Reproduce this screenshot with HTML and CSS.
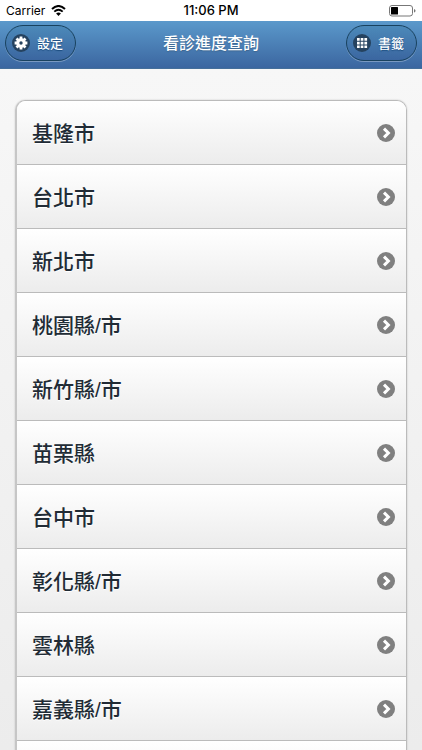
FILE: index.html
```
<!DOCTYPE html>
<html lang="zh-Hant">
<head>
    <meta charset="UTF-8">
    <meta name="viewport" content="width=device-width, initial-scale=1.0">
    <title>看診進度查詢</title>
    <link rel="stylesheet" href="styles.css">
</head>
<body>
    <!-- Shared arrow for the list rows -->
    <svg class="symbols" aria-hidden="true">
        <symbol id="arrow" viewBox="0 0 18 18">
            <circle cx="9" cy="9" r="9" fill="#808080"/>
            <path d="M7 4.6 L11.4 9 L7 13.4" fill="none" stroke="#fff" stroke-width="3"/>
        </symbol>
    </svg>

    <div class="status-bar">
        <div class="status-left">
            <span>Carrier</span>
            <svg width="15" height="11" viewBox="0 0 15 11">
                <path d="M1 4 Q7.5 -2 14 4" fill="none" stroke="#000" stroke-width="2"/>
                <path d="M3.3 6.6 Q7.5 2.8 11.7 6.6" fill="none" stroke="#000" stroke-width="1.9"/>
                <path d="M5.1 8.4 Q7.5 6.4 9.9 8.4 L7.5 11 Z" fill="#000"/>
            </svg>
        </div>
        <div class="status-time">11:06 PM</div>
        <div class="status-right">
            <svg width="27" height="12" viewBox="0 0 27 12">
                <rect x="0.5" y="0.5" width="23" height="10.5" rx="2.5" fill="#fff" stroke="#777"/>
                <rect x="2" y="2" width="7" height="7.5" rx="0.5" fill="#000"/>
                <path d="M25 4 Q26.5 4.4 26.5 5.8 Q26.5 7.2 25 7.6 Z" fill="#777"/>
            </svg>
        </div>
    </div>

    <header class="header">
        <button type="button" class="btn">
            <svg width="18" height="18" viewBox="0 0 18 18">
                <circle cx="9" cy="9" r="9" fill="#25425f"/>
                <path d="M9 2.6V15.4M2.6 9H15.4M4.5 4.5L13.5 13.5M13.5 4.5L4.5 13.5" stroke="#fff" stroke-width="2.8"/>
                <circle cx="9" cy="9" r="4.8" fill="#fff"/>
                <circle cx="9" cy="9" r="1.7" fill="#25425f"/>
            </svg>
            <span>設定</span>
        </button>
        <h1 class="title">看診進度查詢</h1>
        <button type="button" class="btn">
            <svg width="18" height="18" viewBox="0 0 18 18">
                <circle cx="9" cy="9" r="9" fill="#25425f"/>
                <path fill="#fff" d="M4 4h2.7v2.7h-2.7zM7.7 4h2.7v2.7h-2.7zM11.4 4h2.7v2.7h-2.7zM4 7.7h2.7v2.7h-2.7zM7.7 7.7h2.7v2.7h-2.7zM11.4 7.7h2.7v2.7h-2.7zM4 11.4h2.7v2.7h-2.7zM7.7 11.4h2.7v2.7h-2.7zM11.4 11.4h2.7v2.7h-2.7z"/>
            </svg>
            <span>書籤</span>
        </button>
    </header>

    <main class="content">
        <ul class="listview">
            <li><a href="#"><span>基隆市</span><svg class="arrow"><use href="#arrow"/></svg></a></li>
            <li><a href="#"><span>台北市</span><svg class="arrow"><use href="#arrow"/></svg></a></li>
            <li><a href="#"><span>新北市</span><svg class="arrow"><use href="#arrow"/></svg></a></li>
            <li><a href="#"><span>桃園縣/市</span><svg class="arrow"><use href="#arrow"/></svg></a></li>
            <li><a href="#"><span>新竹縣/市</span><svg class="arrow"><use href="#arrow"/></svg></a></li>
            <li><a href="#"><span>苗栗縣</span><svg class="arrow"><use href="#arrow"/></svg></a></li>
            <li><a href="#"><span>台中市</span><svg class="arrow"><use href="#arrow"/></svg></a></li>
            <li><a href="#"><span>彰化縣/市</span><svg class="arrow"><use href="#arrow"/></svg></a></li>
            <li><a href="#"><span>雲林縣</span><svg class="arrow"><use href="#arrow"/></svg></a></li>
            <li><a href="#"><span>嘉義縣/市</span><svg class="arrow"><use href="#arrow"/></svg></a></li>
            <li><a href="#"></a></li>
        </ul>
    </main>
</body>
</html>
```

FILE: styles.css
```
* {
    box-sizing: border-box;
}

body {
    display: flex;
    flex-direction: column;
    height: 100vh;
    margin: 0;
    overflow: hidden;
    background: #fff;
    font-family: Inter, "Noto Sans CJK TC", sans-serif;
}

.symbols {
    display: none;
}

/* Status bar */
.status-bar {
    display: flex;
    flex: none;
    align-items: center;
    height: 21px;
    padding: 0 6px;
    color: #000;
    font-size: 12px;
    line-height: 21px;
}

.status-left, .status-right {
    display: flex;
    flex: 1;
    align-items: center;
    gap: 6px;
}

.status-right {
    justify-content: flex-end;
}

.status-time {
    font-size: 13px;
    font-weight: 500;
}

/* Header */
.header {
    display: flex;
    flex: none;
    align-items: center;
    justify-content: space-between;
    height: 48px;
    padding: 0 5px 4px;
    border-bottom: 1px solid #456f9a;
    background: linear-gradient(#5b99cb, #3b66a0);
}

.title {
    margin: 0;
    color: #fff;
    font-size: 16px;
    font-weight: 500;
    line-height: 24px;
    text-shadow: 0 1px 1px #3e6790;
}

.btn {
    display: flex;
    align-items: center;
    gap: 7px;
    height: 36px;
    padding: 0 12px 0 6px;
    border: 1px solid #19425f;
    border-radius: 18px;
    background: linear-gradient(#4c89b9, #3b66a0);
    box-shadow: 0 1px 0 rgba(255, 255, 255, 0.3);
    color: #fff;
    font-family: inherit;
    font-size: 13px;
    font-weight: 500;
    text-shadow: 0 1px 1px #194b7e;
    cursor: pointer;
}

/* List */
.content {
    flex: 1;
    min-height: 0;
    padding: 31px 15px 0;
    overflow: hidden;
    background: linear-gradient(#f7f7f7, #ececec);
}

.listview {
    margin: 0;
    padding: 0;
    overflow: hidden;
    border: 1px solid #bbb;
    border-left: 2px solid #c6c6c6;
    border-radius: 10px;
    box-shadow: 0 0 2px rgba(0, 0, 0, 0.2);
    list-style: none;
}

.listview a {
    display: flex;
    align-items: center;
    justify-content: space-between;
    height: 64px;
    padding: 0 11px 0 15px;
    border-bottom: 1px solid #bbb;
    background: linear-gradient(#fff, #ececec);
    color: #212b35;
    font-family: "Liberation Sans", "Noto Sans CJK TC", sans-serif;
    font-size: 21px;
    font-weight: 500;
    line-height: 32px;
    text-decoration: none;
    text-shadow: 0 1px 0 #fff;
}

.listview span {
    padding-top: 2px;
}

.arrow {
    width: 18px;
    height: 18px;
}
```
